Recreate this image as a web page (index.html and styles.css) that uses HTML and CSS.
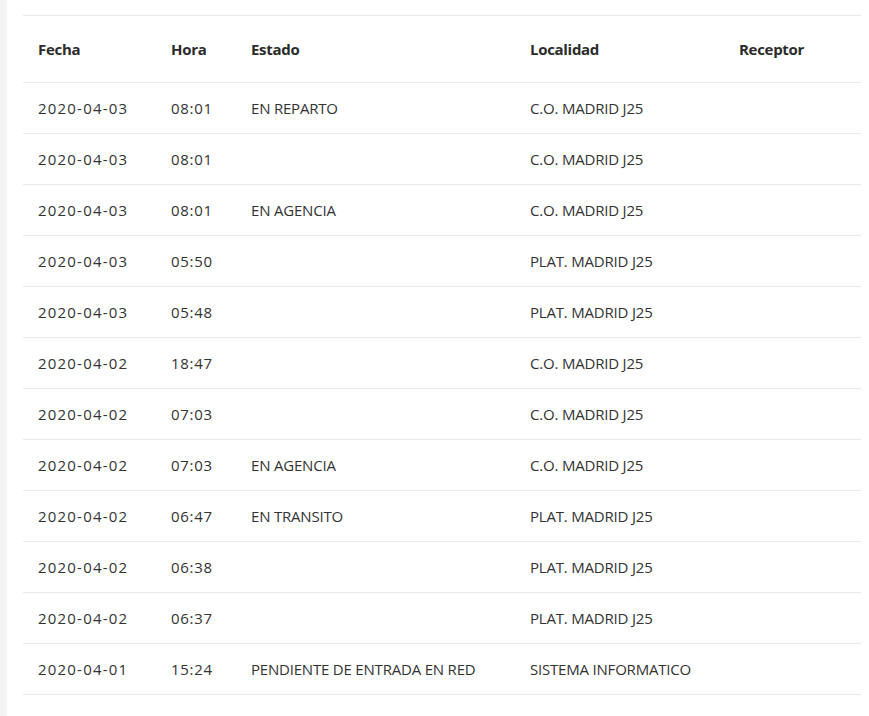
FILE: index.html
```html
<!DOCTYPE html>
<html lang="es">
<head>
<meta charset="utf-8">
<title>Seguimiento</title>
<link rel="stylesheet" href="styles.css">
</head>
<body>
<div class="page">
  <div class="rail"></div>
  <main class="content">
    <table class="tracking">
      <thead>
        <tr>
          <th class="c-fecha">Fecha</th>
          <th class="c-hora">Hora</th>
          <th class="c-estado">Estado</th>
          <th class="c-loc">Localidad</th>
          <th class="c-rec">Receptor</th>
        </tr>
      </thead>
      <tbody>
        <tr><td class="d">2020-04-03</td><td class="t">08:01</td><td>EN REPARTO</td><td>C.O. MADRID J25</td><td></td></tr>
        <tr><td class="d">2020-04-03</td><td class="t">08:01</td><td></td><td>C.O. MADRID J25</td><td></td></tr>
        <tr><td class="d">2020-04-03</td><td class="t">08:01</td><td>EN AGENCIA</td><td>C.O. MADRID J25</td><td></td></tr>
        <tr><td class="d">2020-04-03</td><td class="t">05:50</td><td></td><td>PLAT. MADRID J25</td><td></td></tr>
        <tr><td class="d">2020-04-03</td><td class="t">05:48</td><td></td><td>PLAT. MADRID J25</td><td></td></tr>
        <tr><td class="d">2020-04-02</td><td class="t">18:47</td><td></td><td>C.O. MADRID J25</td><td></td></tr>
        <tr><td class="d">2020-04-02</td><td class="t">07:03</td><td></td><td>C.O. MADRID J25</td><td></td></tr>
        <tr><td class="d">2020-04-02</td><td class="t">07:03</td><td>EN AGENCIA</td><td>C.O. MADRID J25</td><td></td></tr>
        <tr><td class="d">2020-04-02</td><td class="t">06:47</td><td>EN TRANSITO</td><td>PLAT. MADRID J25</td><td></td></tr>
        <tr><td class="d">2020-04-02</td><td class="t">06:38</td><td></td><td>PLAT. MADRID J25</td><td></td></tr>
        <tr><td class="d">2020-04-02</td><td class="t">06:37</td><td></td><td>PLAT. MADRID J25</td><td></td></tr>
        <tr><td class="d">2020-04-01</td><td class="t">15:24</td><td>PENDIENTE DE ENTRADA EN RED</td><td>SISTEMA INFORMATICO</td><td></td></tr>
      </tbody>
    </table>
  </main>
</div>
</body>
</html>
```
FILE: styles.css
```css
html, body {
  margin: 0;
  padding: 0;
  background: #ffffff;
}
body {
  font-family: "Open Sans", "Liberation Sans", sans-serif;
  color: #333333;
}
.page {
  display: flex;
  min-height: 716px;
}
.rail {
  width: 7px;
  flex: 0 0 7px;
  background: #f4f4f4;
}
.content {
  flex: 1;
  padding: 15px 8px 0 16px;
}
.tracking {
  width: 838px;
  border-collapse: collapse;
  table-layout: fixed;
}
.tracking th,
.tracking td {
  padding: 0 0 0 15px;
  text-align: left;
  white-space: nowrap;
  border-bottom: 1px solid #e9e9e9;
  letter-spacing: -0.2px;
}
.tracking thead tr {
  border-top: 1px solid #e9e9e9;
}
.tracking th {
  height: 66px;
  font-weight: 700;
  font-size: 15px;
  color: #2b2b2b;
  letter-spacing: -0.3px;
}
.tracking td {
  height: 50px;
  font-size: 15px;
  font-weight: 400;
}
.tracking td.d {
  letter-spacing: 1.2px;
}
.tracking td.t {
  letter-spacing: 0.7px;
}
.c-fecha { width: 118px; }
.c-hora { width: 65px; }
.c-estado { width: 264px; }
.c-loc { width: 194px; }
.c-rec { width: auto; }
```
